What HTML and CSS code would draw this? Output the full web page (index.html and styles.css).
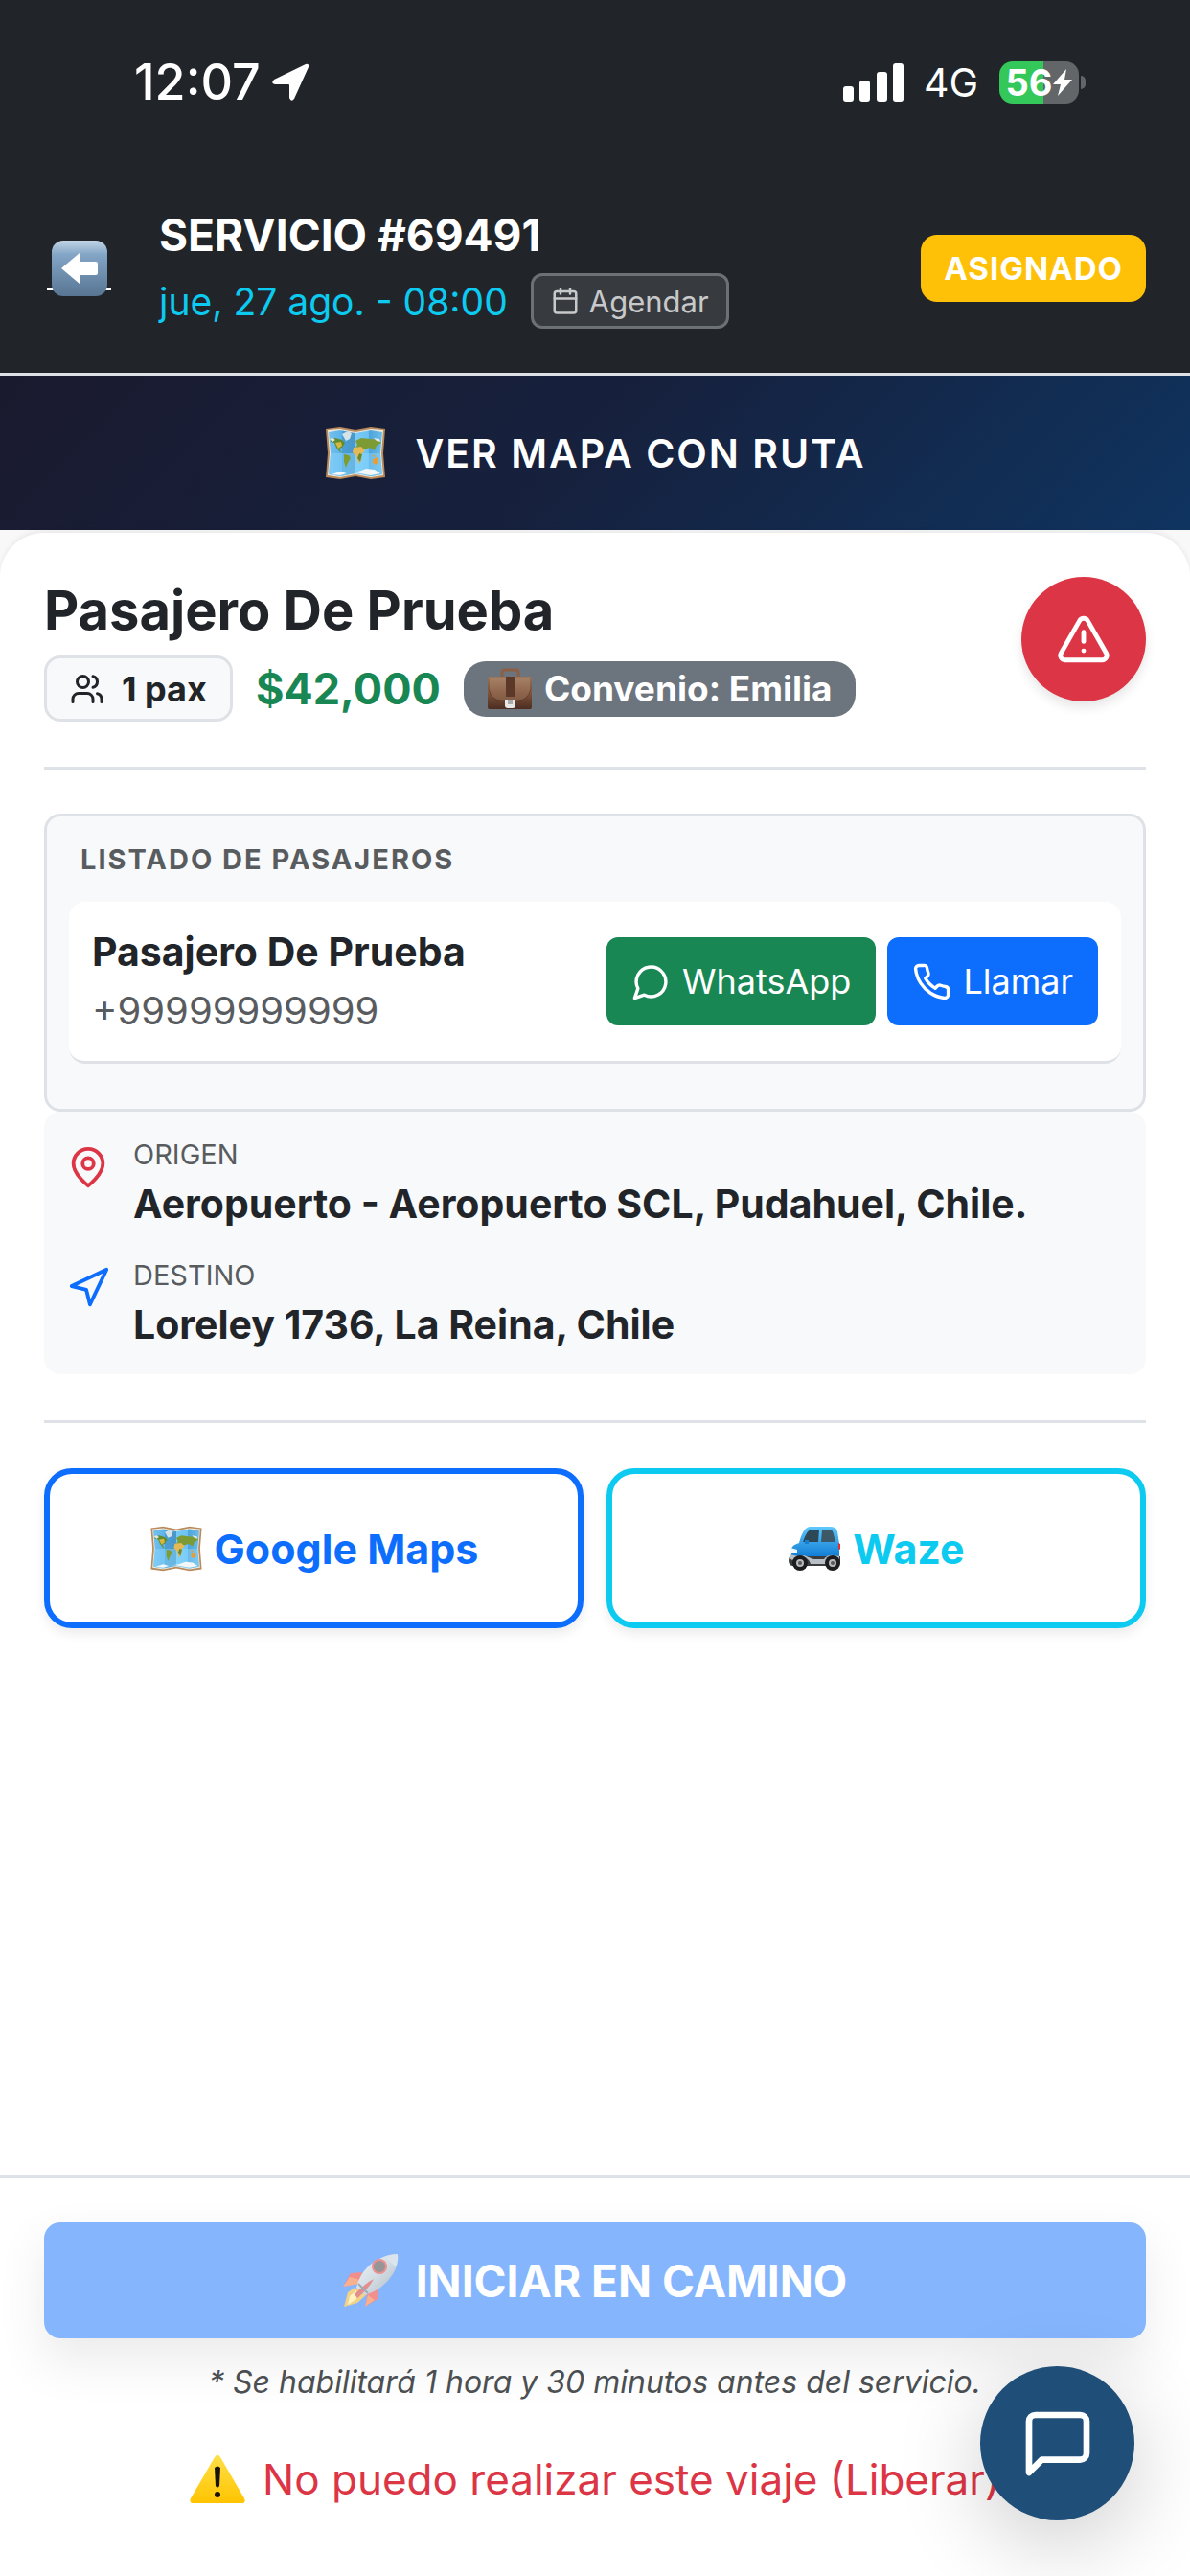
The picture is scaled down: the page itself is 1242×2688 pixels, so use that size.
FILE: index.html
```html
<!DOCTYPE html>
<html lang="es">
<head>
  <meta charset="UTF-8" />
  <meta name="viewport" content="width=device-width, initial-scale=1.0"/>
  <title>Servicio #69491</title>
  <link rel="stylesheet" href="styles.css">
</head>
<body>
  <!-- Shared drawings -->
  <svg class="sprite" aria-hidden="true">
    <defs>
      <linearGradient id="sea" x1="0" y1="0" x2="1" y2="0">
        <stop offset="0" stop-color="#74c0ee"/><stop offset=".24" stop-color="#5db4ea"/>
        <stop offset=".25" stop-color="#4b9fd6"/><stop offset=".49" stop-color="#4a97c8"/>
        <stop offset=".5" stop-color="#79cbf7"/><stop offset=".74" stop-color="#6cc2f3"/>
        <stop offset=".75" stop-color="#4ea3d8"/><stop offset="1" stop-color="#6bbdeb"/>
      </linearGradient>
      <linearGradient id="key" x1="0" y1="0" x2="0" y2="1">
        <stop offset="0" stop-color="#c3d6e6"/><stop offset=".25" stop-color="#83a5c6"/><stop offset="1" stop-color="#587593"/>
      </linearGradient>
      <linearGradient id="leather" x1="0" y1="0" x2="0" y2="1">
        <stop offset="0" stop-color="#b08d70"/><stop offset=".5" stop-color="#80543d"/><stop offset="1" stop-color="#4c2d20"/>
      </linearGradient>
      <linearGradient id="paint" x1="0" y1="0" x2="0" y2="1">
        <stop offset="0" stop-color="#5ec8ff"/><stop offset="1" stop-color="#0a76cf"/>
      </linearGradient>
      <linearGradient id="hull" x1="0" y1="0" x2="1" y2="1">
        <stop offset="0" stop-color="#e8f1f8"/><stop offset=".5" stop-color="#a9bccb"/><stop offset="1" stop-color="#5d7387"/>
      </linearGradient>
      <linearGradient id="sign" x1="0" y1="0" x2="0" y2="1">
        <stop offset="0" stop-color="#ffe04a"/><stop offset="1" stop-color="#ffc400"/>
      </linearGradient>
    </defs>
    <symbol id="map" viewBox="0 0 64 56">
      <path d="M1 3 16 1 32 4 48 1 63 3 61 28 63 53 48 55 32 52 16 55 1 53 3 28Z" fill="#b88a5c"/>
      <path d="M3 4 16 3 32 6 48 3 61 4 59 28 61 51 48 53 32 50 16 53 3 51 5 28Z" fill="#f1eadb"/>
      <path d="M4 6 16 4 32 7 48 4 60 6 58 28 60 50 48 52 32 49 16 52 4 50 6 28Z" fill="url(#sea)"/>
      <path d="M6 28H58L60 50 48 52 32 49 16 52 4 50Z" fill="#8ddaff" opacity=".45"/>
      <path d="M6 14l5-2 7 2 3 3-3 5-3 1 2 4 3 1-4-1-4-5-2-5-4-1z" fill="#5f8d2e"/>
      <path d="M11 17l6-1 1 4-4 3z" fill="#d9b63f"/>
      <path d="M18 8l6-3 4 2-2 6-4 2z" fill="#d5e3e8"/>
      <path d="M20 29l5 1 2 3-3 5-2 5-2-6z" fill="#7f9c30"/>
      <path d="M32 15l6-3 9 1 9 1 3 3-5 3-2 5-5-3-5 2-3-1-3 3-4-4 2-3z" fill="#7d9b34"/>
      <path d="M30 22l8-1 4 4-3 3-1 7-3 4-2-8-4-4z" fill="#e4b956"/>
      <path d="M36 28l3 1-2 8-3-4z" fill="#668b31"/>
      <path d="M5 13l3-1 3 2-3 2zM51 12l6 1 1 3-4-1z" fill="#e5e8e4"/>
      <path d="M50 34l5-2 1 5-3 3-3-2zM49 29l4 2-2 1z" fill="#e99d37"/>
      <path d="M7 50l9-3 7 2-7 2zM27 48l8-1 8-3 9 1 6 4-10 2-16-3z" fill="#f3f7f8"/>
    </symbol>
    <symbol id="case" viewBox="0 0 48 44">
      <path d="M16 9V5q0-3 3-3h11q3 0 3 3v4" fill="none" stroke="#8c5e43" stroke-width="3"/>
      <rect x="1" y="9" width="46" height="34" rx="2" fill="url(#leather)"/>
      <path d="M2 10h44v12q-3 12-13 12H15Q5 34 2 22Z" fill="#a07a5e" opacity=".45" stroke="#4d2b1d"/>
      <path d="M20 9h9v21h-9z" fill="#5b3827"/>
      <path d="M19 33h11v6q0 3-3 3h-5q-3 0-3-3z" fill="#e8e8e8"/>
      <path d="M22 33h5v5h-5z" fill="#aaa"/>
    </symbol>
    <symbol id="car" viewBox="0 0 56 48">
      <path d="M12 18Q16 2 23 1h21q7 0 8 5l2 13v16H4V24q1-4 8-6Z" fill="url(#paint)"/>
      <path d="M16 17Q20 4 25 4h8l-1 13z" fill="#2c4756"/>
      <path d="M36 4h8q3 0 4 5l2 8H35z" fill="#3d5867"/>
      <path d="M2 32h53v6q0 4-4 4H6q-5 0-5-6z" fill="#3b3c3f"/>
      <path d="M3 30q8 3 14 1l10 4h11q4-5 10-4l6 1v3l-5-1q-6 0-8 6H24q-2-7-9-7-8 0-10 3l-3-2z" fill="#b9bfc4"/>
      <path d="M3 23l7 2v4l-7-1z" fill="#eff9ff"/>
      <path d="M53 18l2 1v6l-2-1z" fill="#e12d2d"/>
      <path d="M18 15h4v4h-4z" fill="#1580cd"/>
      <circle cx="13" cy="39" r="8" fill="#1d1d1f"/><circle cx="13" cy="39" r="4" fill="#b7b9bc"/><circle cx="13" cy="39" r="2" fill="#55585c"/>
      <circle cx="47" cy="39" r="8" fill="#1d1d1f"/><circle cx="47" cy="39" r="4" fill="#b7b9bc"/><circle cx="47" cy="39" r="2" fill="#55585c"/>
    </symbol>
    <symbol id="rocket" viewBox="0 0 58 56">
      <path d="M20 19 8 20 0 34 17 31zM37 35l-1 12-13 8 3-17z" fill="#e51f1f"/>
      <path d="M0 34l7-10 11 3-1 4zM23 55l3-12 7 5z" fill="#ff9a25" opacity=".55"/>
      <path d="M12 35 5 40 1 55 15 51 25 42z" fill="#e5a614"/>
      <path d="M14 38 7 44 5 53 14 47z" fill="#ffe984"/>
      <path d="M14 35Q19 15 36 6 46 0 57 0 58 11 52 21 42 37 23 43Z" fill="url(#hull)"/>
      <path d="M43 3q7-3 14-3 1 7-2 14-6-7-12-11z" fill="#b4cadb"/>
      <circle cx="38" cy="13" r="8" fill="#d72424"/><circle cx="38" cy="13" r="6" fill="#332d33"/>
      <path d="M12 42q12-12 20-16-5 10-17 20z" fill="#c81f1f"/>
      <path d="M16 31l10 10" stroke="#43586b" stroke-width="2"/>
    </symbol>
    <symbol id="warn" viewBox="0 0 58 52">
      <path d="M26 3q3-5 6 0l25 43q2 5-3 5H4q-5 0-3-5Z" fill="url(#sign)"/>
      <path d="M26 14q3-3 6 0l-1 19q-2 3-4 0z" fill="#161300"/>
      <circle cx="29" cy="42" r="3" fill="#161300"/>
    </symbol>
  </svg>

  <div class="status-bar">
    <div class="status-group">
      <span class="clock">12:07</span>
      <svg class="location" viewBox="0 0 40 40" fill="#fff"><path d="M36 1q4-1 3 3L24 37q-3 4-5-1V23q0-1-1-1H4q-5-1-1-5Z"/></svg>
    </div>
    <div class="status-group">
      <svg class="signal" viewBox="0 0 64 40" fill="#fff">
        <rect x="0" y="24" width="11" height="16" rx="3"/><rect x="17" y="18" width="11" height="22" rx="3"/>
        <rect x="35" y="9" width="11" height="31" rx="3"/><rect x="52" y="0" width="11" height="40" rx="3"/>
      </svg>
      <span class="network">4G</span>
      <div class="battery">
        <span>56</span>
        <svg viewBox="0 0 20 28" fill="#fff"><path d="M14 0 0 16h8L5 28 20 11h-8Z"/></svg>
      </div>
    </div>
  </div>

  <header class="header">
    <a href="#" class="back-link" aria-label="Volver">
      <svg viewBox="0 0 58 58"><rect width="58" height="58" rx="12" fill="url(#key)"/><path d="M10 29 29 13v9h17q2 0 2 2v10q0 2-2 2H29v9Z" fill="#fff"/></svg>
    </a>
    <div class="header-info">
      <h1>SERVICIO #69491</h1>
      <div class="date-row">
        <span class="date">jue, 27 ago. - 08:00</span>
        <button type="button" class="agenda-btn">
          <svg class="line-icon" viewBox="0 0 24 24"><rect x="3" y="4" width="18" height="18" rx="2"/><path d="M16 2v4M8 2v4M3 10h18"/></svg>
          Agendar
        </button>
      </div>
    </div>
    <span class="status-badge">ASIGNADO</span>
  </header>

  <button type="button" class="map-btn">
    <svg class="map-icon"><use href="#map"/></svg>
    VER MAPA CON RUTA
  </button>

  <main class="sheet">
    <section class="summary">
      <div>
        <h2>Pasajero De Prueba</h2>
        <div class="tags">
          <span class="pax">
            <svg class="line-icon" viewBox="0 0 24 24"><path d="M16 21v-2a4 4 0 0 0-4-4H6a4 4 0 0 0-4 4v2"/><circle cx="9" cy="7" r="4"/><path d="M22 21v-2a4 4 0 0 0-3-3.87M16 3.13a4 4 0 0 1 0 7.75"/></svg>
            1 pax
          </span>
          <span class="price">$42,000</span>
          <span class="deal"><svg class="case-icon"><use href="#case"/></svg>Convenio: Emilia</span>
        </div>
      </div>
      <button type="button" class="sos-btn" aria-label="Emergencia">
        <svg class="line-icon" viewBox="0 0 24 24"><path d="m21.73 18-8-14a2 2 0 0 0-3.48 0l-8 14A2 2 0 0 0 4 21h16a2 2 0 0 0 1.73-3M12 9v4M12 17h.01"/></svg>
      </button>
    </section>

    <section class="passengers">
      <h3>LISTADO DE PASAJEROS</h3>
      <div class="passenger">
        <div>
          <p class="name">Pasajero De Prueba</p>
          <p class="phone">+99999999999</p>
        </div>
        <div class="contact">
          <a href="#" class="contact-btn whatsapp">
            <svg class="line-icon" viewBox="0 0 24 24"><path d="M7.9 20A9 9 0 1 0 4 16.1L2 22Z"/></svg>
            WhatsApp
          </a>
          <a href="#" class="contact-btn call">
            <svg class="line-icon" viewBox="0 0 24 24"><path d="M22 16.92v3a2 2 0 0 1-2.18 2 19.79 19.79 0 0 1-8.63-3.07 19.5 19.5 0 0 1-6-6 19.79 19.79 0 0 1-3.07-8.67A2 2 0 0 1 4.11 2h3a2 2 0 0 1 2 1.72 12.84 12.84 0 0 0 .7 2.81 2 2 0 0 1-.45 2.11L8.09 9.91a16 16 0 0 0 6 6l1.27-1.27a2 2 0 0 1 2.11-.45 12.84 12.84 0 0 0 2.81.7A2 2 0 0 1 22 16.92z"/></svg>
            Llamar
          </a>
        </div>
      </div>
    </section>

    <section class="route">
      <div class="stop">
        <svg class="line-icon origin" viewBox="0 0 24 24"><path d="M20 10c0 6-8 12-8 12s-8-6-8-12a8 8 0 0 1 16 0Z"/><circle cx="12" cy="10" r="3"/></svg>
        <div>
          <p class="stop-label">ORIGEN</p>
          <p class="address">Aeropuerto - Aeropuerto SCL, Pudahuel, Chile.</p>
        </div>
      </div>
      <div class="stop">
        <svg class="line-icon target" viewBox="0 0 24 24"><path d="m3 11 19-9-9 19-2-8-8-2z"/></svg>
        <div>
          <p class="stop-label">DESTINO</p>
          <p class="address">Loreley 1736, La Reina, Chile</p>
        </div>
      </div>
    </section>

    <section class="nav-apps">
      <a href="#" class="nav-btn google"><svg class="nav-icon"><use href="#map"/></svg>Google Maps</a>
      <a href="#" class="nav-btn waze"><svg class="nav-icon"><use href="#car"/></svg>Waze</a>
    </section>
  </main>

  <footer class="footer">
    <button type="button" class="start-btn" disabled><svg class="footer-icon"><use href="#rocket"/></svg>INICIAR EN CAMINO</button>
    <p class="hint">* Se habilitará 1 hora y 30 minutos antes del servicio.</p>
    <button type="button" class="release-btn"><svg class="footer-icon"><use href="#warn"/></svg>No puedo realizar este viaje (Liberar)</button>
  </footer>

  <button type="button" class="chat-btn" aria-label="Chat">
    <svg class="line-icon" viewBox="0 0 24 24"><path d="M21 15a2 2 0 0 1-2 2H7l-4 4V5a2 2 0 0 1 2-2h14a2 2 0 0 1 2 2z"/></svg>
  </button>
</body>
</html>
```

FILE: styles.css
```css
* {
  box-sizing: border-box;
}

body {
  margin: 0;
  min-height: 100vh;
  display: flex;
  flex-direction: column;
  background-color: #f8f8f8;
  font-family: Inter, "Liberation Sans", sans-serif;
  color: #212529;
}

h1, h2, h3, p {
  margin: 0;
}

a {
  text-decoration: none;
}

button {
  border: none;
  font-family: inherit;
}

svg {
  display: block;
  flex-shrink: 0;
}

.sprite {
  position: absolute;
  width: 0;
  height: 0;
}

.line-icon {
  fill: none;
  stroke: currentColor;
  stroke-width: 2;
  stroke-linecap: round;
  stroke-linejoin: round;
}

/* Status bar */
.status-bar {
  height: 171px;
  padding: 0 116px 0 140px;
  display: flex;
  justify-content: space-between;
  align-items: center;
  background-color: #212529;
  color: white;
}

.status-group {
  display: flex;
  align-items: center;
}

.clock {
  font-size: 52px;
  font-weight: 500;
}

.location {
  width: 40px;
  height: 40px;
  margin-left: 11px;
}

.signal {
  width: 64px;
  height: 40px;
}

.network {
  margin: 0 22px 0 20px;
  font-size: 41px;
}

.battery {
  position: relative;
  width: 83px;
  height: 44px;
  display: flex;
  align-items: center;
  justify-content: center;
  gap: 1px;
  border-radius: 14px;
  background: linear-gradient(to right, #34c759 56%, #636669 56%);
  font-size: 38px;
  font-weight: 700;
}

.battery::after {
  content: "";
  position: absolute;
  right: -7px;
  width: 5px;
  height: 14px;
  border-radius: 0 6px 6px 0;
  background-color: #636669;
}

.battery svg {
  width: 20px;
  height: 28px;
}

/* Header */
.header {
  padding: 46px;
  display: flex;
  align-items: center;
  background-color: #212529;
  border-bottom: 3px solid #dee2e6;
  color: white;
}

.back-link {
  position: relative;
  width: 67px;
  margin: 0 50px 0 3px;
  display: flex;
  justify-content: center;
}

.back-link::before {
  content: "";
  position: absolute;
  left: 0;
  right: 0;
  bottom: 6px;
  height: 3px;
  background-color: white;
}

.back-link svg {
  position: relative;
  width: 58px;
  height: 58px;
}

.header-info {
  flex: 1;
}

h1 {
  font-size: 46px;
  font-weight: 700;
  line-height: 56px;
}

.date-row {
  display: flex;
  align-items: center;
  gap: 24px;
  margin-top: 12px;
}

.date {
  font-size: 39px;
  color: #0dcaf0;
}

.agenda-btn {
  height: 58px;
  padding: 0 18px;
  display: flex;
  align-items: center;
  gap: 10px;
  border: 3px solid #6c7175;
  border-radius: 12px;
  background-color: #373b3f;
  color: #c8c9ca;
  font-size: 31px;
}

.agenda-btn svg {
  width: 30px;
  height: 30px;
}

.status-badge {
  padding: 0 24px;
  border-radius: 17px;
  background-color: #ffc107;
  font-size: 33px;
  font-weight: 700;
  line-height: 70px;
  letter-spacing: 1px;
}

.map-btn {
  height: 161px;
  display: flex;
  align-items: center;
  justify-content: center;
  gap: 29px;
  background: linear-gradient(135deg, #1a1a2e 0%, #16213e 50%, #0f3460 100%);
  color: white;
  font-size: 41px;
  font-weight: 600;
  letter-spacing: 2px;
}

.map-icon {
  width: 66px;
  height: 56px;
}

/* Trip details */
.sheet {
  flex: 1;
  margin-top: 3px;
  padding: 46px;
  background-color: white;
  border-radius: 46px 46px 0 0;
  box-shadow: 0 -3px 4px rgba(0, 0, 0, 0.05);
}

.summary {
  padding-bottom: 47px;
  margin-bottom: 46px;
  display: flex;
  justify-content: space-between;
  align-items: flex-start;
  border-bottom: 3px solid #dee2e6;
}

h2 {
  font-size: 56px;
  font-weight: 700;
  line-height: 70px;
}

.tags {
  margin-top: 12px;
  display: flex;
  align-items: center;
  gap: 24px;
}

.pax {
  height: 69px;
  padding: 0 24px;
  display: flex;
  align-items: center;
  gap: 18px;
  border: 3px solid #dee2e6;
  border-radius: 17px;
  background-color: #f8f9fa;
  font-size: 36px;
  font-weight: 700;
}

.pax svg {
  width: 36px;
  height: 36px;
}

.price {
  font-size: 45px;
  font-weight: 700;
  color: #198754;
}

.deal {
  height: 58px;
  padding: 0 24px;
  display: flex;
  align-items: center;
  gap: 12px;
  border-radius: 23px;
  background-color: #6c757d;
  color: white;
  font-size: 37px;
  font-weight: 700;
}

.case-icon {
  width: 48px;
  height: 44px;
}

.sos-btn {
  width: 130px;
  height: 130px;
  display: flex;
  align-items: center;
  justify-content: center;
  border-radius: 50%;
  background-color: #dc3545;
  box-shadow: 0 6px 12px rgba(0, 0, 0, 0.1);
  color: white;
}

.sos-btn svg {
  width: 58px;
  height: 58px;
}

.passengers {
  padding: 23px;
  border: 3px solid #dee2e6;
  border-radius: 17px;
  background-color: #f8f9fa;
}

h3 {
  margin: 0 0 22px 12px;
  font-size: 29px;
  font-weight: 700;
  line-height: 44px;
  letter-spacing: 2px;
  color: #595c5f;
}

.passenger {
  margin-bottom: 24px;
  padding: 22px 24px;
  display: flex;
  justify-content: space-between;
  align-items: center;
  border-bottom: 3px solid #dee2e6;
  border-radius: 17px;
  background-color: white;
}

.name {
  font-size: 41px;
  font-weight: 700;
  line-height: 61px;
}

.phone {
  font-size: 40px;
  line-height: 61px;
  color: #595c5f;
}

.contact {
  display: flex;
  gap: 12px;
}

.contact-btn {
  height: 92px;
  padding: 0 26px;
  display: flex;
  align-items: center;
  gap: 12px;
  border-radius: 12px;
  color: white;
  font-size: 36px;
}

.contact-btn svg {
  width: 41px;
  height: 41px;
}

.whatsapp {
  background-color: #198754;
}

.call {
  background-color: #0d6efd;
}

.route {
  padding: 23px;
  display: flex;
  flex-direction: column;
  gap: 24px;
  border-radius: 17px;
  background-color: #f8f9fa;
}

.stop {
  display: flex;
  gap: 24px;
}

.stop svg {
  width: 46px;
  height: 46px;
  margin-top: 12px;
}

.origin {
  color: #dc3545;
}

.target {
  color: #0d6efd;
}

.stop-label {
  font-size: 29px;
  line-height: 44px;
  color: #595c5f;
}

.address {
  font-size: 41px;
  font-weight: 700;
  line-height: 58px;
}

.nav-apps {
  margin-top: 48px;
  padding-top: 47px;
  display: grid;
  grid-template-columns: 1fr 1fr;
  gap: 24px;
  border-top: 3px solid #dee2e6;
}

.nav-btn {
  height: 167px;
  display: flex;
  align-items: center;
  justify-content: center;
  gap: 12px;
  border: 6px solid;
  border-radius: 29px;
  box-shadow: 0 6px 12px rgba(0, 0, 0, 0.08);
  font-size: 43px;
  font-weight: 700;
}

.nav-icon {
  width: 56px;
  height: 48px;
}

.google {
  color: #0d6efd;
}

.waze {
  color: #0dcaf0;
}

/* Bottom actions */
.footer {
  padding: 46px;
  display: flex;
  flex-direction: column;
  border-top: 3px solid #dee2e6;
  background-color: white;
}

.start-btn, .release-btn {
  display: flex;
  align-items: center;
  justify-content: center;
  gap: 18px;
}

.start-btn {
  height: 121px;
  border-radius: 17px;
  background-color: #0d6efd;
  box-shadow: 0 23px 46px rgba(0, 0, 0, 0.15);
  color: white;
  font-size: 46px;
  font-weight: 700;
  opacity: 0.5;
}

.footer-icon {
  width: 58px;
  height: 56px;
}

.hint {
  margin: 24px 0;
  font-size: 32px;
  font-style: italic;
  line-height: 44px;
  text-align: center;
  color: #4d5154;
}

.release-btn {
  height: 110px;
  background: none;
  color: #dc3545;
  font-size: 44px;
}

.chat-btn {
  position: fixed;
  right: 58px;
  bottom: 58px;
  width: 161px;
  height: 161px;
  display: flex;
  align-items: center;
  justify-content: center;
  border-radius: 50%;
  background-color: #1f4e79;
  box-shadow: 0 23px 92px rgba(0, 0, 0, 0.2);
  color: white;
}

.chat-btn svg {
  width: 80px;
  height: 80px;
}
```
